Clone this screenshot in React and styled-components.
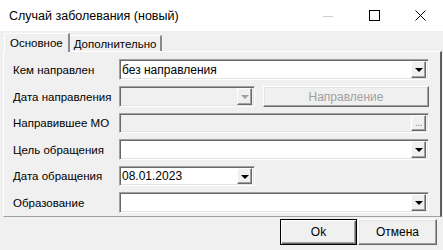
import React from 'react';
import styled, { createGlobalStyle } from 'styled-components';

const GlobalStyle = createGlobalStyle`
  html, body { margin: 0; padding: 0; background: #f0f0f0; }
  body { font-family: "Liberation Sans", Arial, sans-serif; }
`;

const Window = styled.div`
  width: 443px;
  height: 250px;
  display: flex;
  flex-direction: column;
  background: #f0f0f0;
  overflow: hidden;
`;

const TitleBar = styled.div`
  height: 31px;
  background: #fff;
  display: flex;
  align-items: center;
  padding-left: 9px;
  box-sizing: border-box;
`;

const Title = styled.div`
  flex: 1;
  font-family: "Liberation Sans", Arial, sans-serif;
  font-size: 12.5px;
  color: #000;
`;

const Controls = styled.div`
  display: flex;
  height: 31px;
`;

const Control = styled.div`
  width: 46px;
  height: 31px;
  display: flex;
  align-items: center;
  justify-content: center;
`;

const Body = styled.div`
  flex: 1;
  display: flex;
  flex-direction: column;
`;

const TabStrip = styled.div`
  display: flex;
  align-items: flex-end;
  height: 20px;
  padding: 0 0 0 4px;
`;

const Tab = styled.div`
  height: ${p => (p.$active ? 19 : 16)}px;
  padding: 0 ${p => (p.$active ? 5 : 4)}px;
  display: flex;
  align-items: center;
  box-sizing: border-box;
  font-size: 11.5px;
  color: #000;
  background: #f0f0f0;
  border-top: 1px solid #fff;
  border-left: ${p => (p.$active ? '1px solid #fff' : 'none')};
  border-right: 2px solid #8a8a8a;
  position: relative;
  z-index: ${p => (p.$active ? 1 : 0)};
  margin-bottom: ${p => (p.$active ? -1 : 0)}px;
`;

const Panel = styled.div`
  margin: 0 1px 0 3px;
  border-top: 1px solid #fff;
  border-left: 1px solid #fff;
  border-right: 2px solid #5f5f5f;
  border-bottom: 1px solid #a0a0a0;
  padding: 7px 11px 3px 9px;
  display: grid;
  grid-template-columns: 106px 1fr;
  row-gap: 6px;
  align-items: center;
`;

const Label = styled.div`
  font-size: 11.5px;
  color: #000;
  height: ${p => p.$h}px;
  display: flex;
  align-items: center;
  white-space: nowrap;
`;

const FieldRow = styled.div`
  display: flex;
  height: ${p => p.$h}px;
  gap: 8px;
`;

const Sunken = styled.div`
  height: 100%;
  width: ${p => (p.$w ? `${p.$w}px` : 'auto')};
  flex: ${p => (p.$w ? 'none' : 1)};
  box-sizing: border-box;
  background: ${p => (p.$disabled ? '#f0f0f0' : '#fff')};
  border: 1px solid;
  border-color: #a0a0a0 #fff #fff #a0a0a0;
  box-shadow: inset 1px 1px 0 #696969, inset -1px -1px 0 #e3e3e3;
  display: flex;
  align-items: center;
  padding: 1px 2px 1px 2px;
`;

const Value = styled.div`
  flex: 1;
  font-size: 12px;
  color: #000;
  white-space: nowrap;
`;

const DropBtn = styled.div`
  width: 15px;
  height: 100%;
  box-sizing: border-box;
  background: #f0f0f0;
  border: 1px solid;
  border-color: #fff #696969 #696969 #fff;
  box-shadow: inset -1px -1px 0 #a0a0a0;
  display: flex;
  align-items: center;
  justify-content: center;
`;

const Dots = styled.span`
  display: block;
  font-size: 11px;
  line-height: 11px;
  color: #8c8c8c;
  letter-spacing: -0.5px;
  margin-top: -1px;
`;

const Arrow = styled.div`
  width: 0;
  height: 0;
  border-left: 4px solid transparent;
  border-right: 4px solid transparent;
  border-top: 4px solid ${p => (p.$disabled ? '#a0a0a0' : '#000')};
  margin-top: 1px;
`;

const PushButton = styled.div`
  flex: 1;
  height: 100%;
  box-sizing: border-box;
  background: #f0f0f0;
  border: 1px solid;
  border-color: #fff #696969 #696969 #fff;
  box-shadow: inset -1px -1px 0 #a0a0a0, inset 1px 1px 0 #e3e3e3;
  display: flex;
  align-items: center;
  justify-content: center;
  font-size: 12px;
  color: ${p => (p.$disabled ? '#a0a0a0' : '#000')};
`;

const Footer = styled.div`
  flex: 1;
  display: flex;
  justify-content: flex-end;
  align-items: flex-start;
  padding: 2px 6px 0 0;
  gap: 1px;
`;

const DialogButton = styled.div`
  width: ${p => p.$w}px;
  height: 26px;
  box-sizing: border-box;
  background: #f0f0f0;
  border: 1px solid;
  border-color: ${p => (p.$default ? '#000' : '#fff #696969 #696969 #fff')};
  box-shadow: ${p =>
    p.$default
      ? 'inset 1px 1px 0 #fff, inset -1px -1px 0 #696969, inset -2px -2px 0 #a0a0a0'
      : 'inset -1px -1px 0 #a0a0a0, inset 1px 1px 0 #e3e3e3'};
  display: flex;
  align-items: center;
  justify-content: center;
  font-size: 12px;
  color: #000;
`;

const Combo = ({ value, disabled, w }) => (
  <Sunken $disabled={disabled} $w={w}>
    <Value>{value}</Value>
    <DropBtn>
      <Arrow $disabled={disabled} />
    </DropBtn>
  </Sunken>
);

const rows = [
  { label: 'Кем направлен', h: 21 },
  { label: 'Дата направления', h: 21 },
  { label: 'Направившее МО', h: 20 },
  { label: 'Цель обращения', h: 21 },
  { label: 'Дата обращения', h: 20 },
  { label: 'Образование', h: 21 },
];

export default function App() {
  return (
    <Window>
      <GlobalStyle />
      <TitleBar>
        <Title>Случай заболевания (новый)</Title>
        <Controls>
          <Control>
            <svg width="10" height="10" viewBox="0 0 10 10">
              <line x1="0" y1="5.5" x2="10" y2="5.5" stroke="#cfcfcf" strokeWidth="1" />
            </svg>
          </Control>
          <Control>
            <svg width="11" height="11" viewBox="0 0 11 11">
              <rect x="0.5" y="0.5" width="10" height="10" fill="none" stroke="#000" strokeWidth="1" />
            </svg>
          </Control>
          <Control>
            <svg width="11" height="11" viewBox="0 0 11 11">
              <path d="M0.5 0.5 L10.5 10.5 M10.5 0.5 L0.5 10.5" stroke="#000" strokeWidth="1" />
            </svg>
          </Control>
        </Controls>
      </TitleBar>
      <Body>
        <TabStrip>
          <Tab $active>Основное</Tab>
          <Tab>Дополнительно</Tab>
        </TabStrip>
        <Panel>
          <Label $h={rows[0].h}>{rows[0].label}</Label>
          <FieldRow $h={rows[0].h}>
            <Combo value="без направления" />
          </FieldRow>

          <Label $h={rows[1].h}>{rows[1].label}</Label>
          <FieldRow $h={rows[1].h}>
            <Combo disabled w={136} />
            <PushButton $disabled>Направление</PushButton>
          </FieldRow>

          <Label $h={rows[2].h}>{rows[2].label}</Label>
          <FieldRow $h={rows[2].h}>
            <Sunken $disabled>
              <Value />
              <DropBtn>
                <Dots>...</Dots>
              </DropBtn>
            </Sunken>
          </FieldRow>

          <Label $h={rows[3].h}>{rows[3].label}</Label>
          <FieldRow $h={rows[3].h}>
            <Combo />
          </FieldRow>

          <Label $h={rows[4].h}>{rows[4].label}</Label>
          <FieldRow $h={rows[4].h}>
            <Combo value="08.01.2023" w={136} />
          </FieldRow>

          <Label $h={rows[5].h}>{rows[5].label}</Label>
          <FieldRow $h={rows[5].h}>
            <Combo />
          </FieldRow>
        </Panel>
        <Footer>
          <DialogButton $default $w={77}>Ok</DialogButton>
          <DialogButton $w={79}>Отмена</DialogButton>
        </Footer>
      </Body>
    </Window>
  );
}
